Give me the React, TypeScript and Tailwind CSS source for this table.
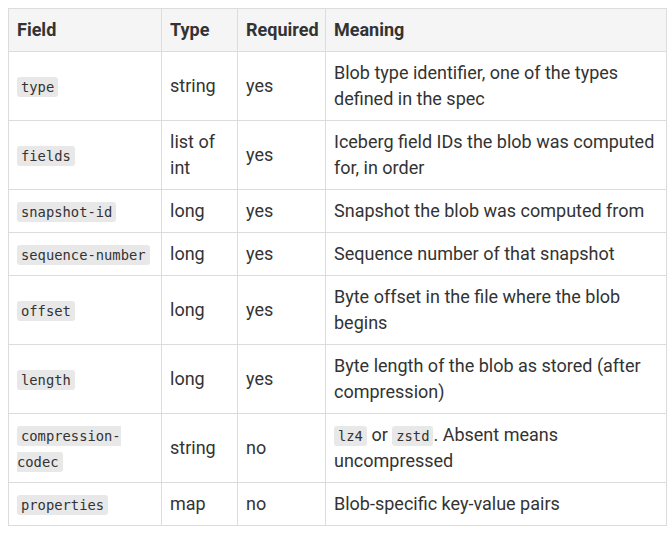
import React from "react"

type Row = {
    field: string
    type: string
    required: string
    meaning: React.ReactNode
}

function Code({ children }: { children: React.ReactNode }) {
    return (
        <code className="rounded-[3px] bg-[#e8e8e8] px-[4px] py-[2px] font-['DejaVu_Sans_Mono',monospace] text-[13.8px] leading-[20px] text-[#333]">
            {children}
        </code>
    )
}

const rows: Row[] = [
    { field: "type", type: "string", required: "yes", meaning: "Blob type identifier, one of the types defined in the spec" },
    { field: "fields", type: "list of int", required: "yes", meaning: "Iceberg field IDs the blob was computed for, in order" },
    { field: "snapshot-id", type: "long", required: "yes", meaning: "Snapshot the blob was computed from" },
    { field: "sequence-number", type: "long", required: "yes", meaning: "Sequence number of that snapshot" },
    { field: "offset", type: "long", required: "yes", meaning: "Byte offset in the file where the blob begins" },
    { field: "length", type: "long", required: "yes", meaning: "Byte length of the blob as stored (after compression)" },
    {
        field: "compression-codec",
        type: "string",
        required: "no",
        meaning: (
            <>
                <Code>lz4</Code> or <Code>zstd</Code>. Absent means uncompressed
            </>
        ),
    },
    { field: "properties", type: "map", required: "no", meaning: "Blob-specific key-value pairs" },
]

export default function App() {
    return (
        <div className="min-h-[534px] bg-white p-[8px] font-['Roboto',sans-serif] text-[18px] leading-[26px] text-[#333]">
            <table className="w-[659px] table-fixed border-collapse">
                <colgroup>
                    <col className="w-[153px]" />
                    <col className="w-[76px]" />
                    <col className="w-[88px]" />
                    <col />
                </colgroup>
                <thead>
                    <tr className="bg-[#f5f5f5]">
                        {["Field", "Type", "Required", "Meaning"].map((h) => (
                            <th key={h} className="border border-[#dcdcdc] px-[8px] py-[8px] text-left font-bold">
                                {h}
                            </th>
                        ))}
                    </tr>
                </thead>
                <tbody>
                    {rows.map((r) => (
                        <tr key={r.field}>
                            <td className="border border-[#dcdcdc] px-[8px] py-[8px] align-middle">
                                <Code>{r.field}</Code>
                            </td>
                            <td className="border border-[#dcdcdc] px-[8px] py-[8px] align-middle">{r.type}</td>
                            <td className="border border-[#dcdcdc] px-[8px] py-[8px] align-middle">{r.required}</td>
                            <td className="border border-[#dcdcdc] px-[8px] py-[8px] align-middle">{r.meaning}</td>
                        </tr>
                    ))}
                </tbody>
            </table>
        </div>
    )
}
